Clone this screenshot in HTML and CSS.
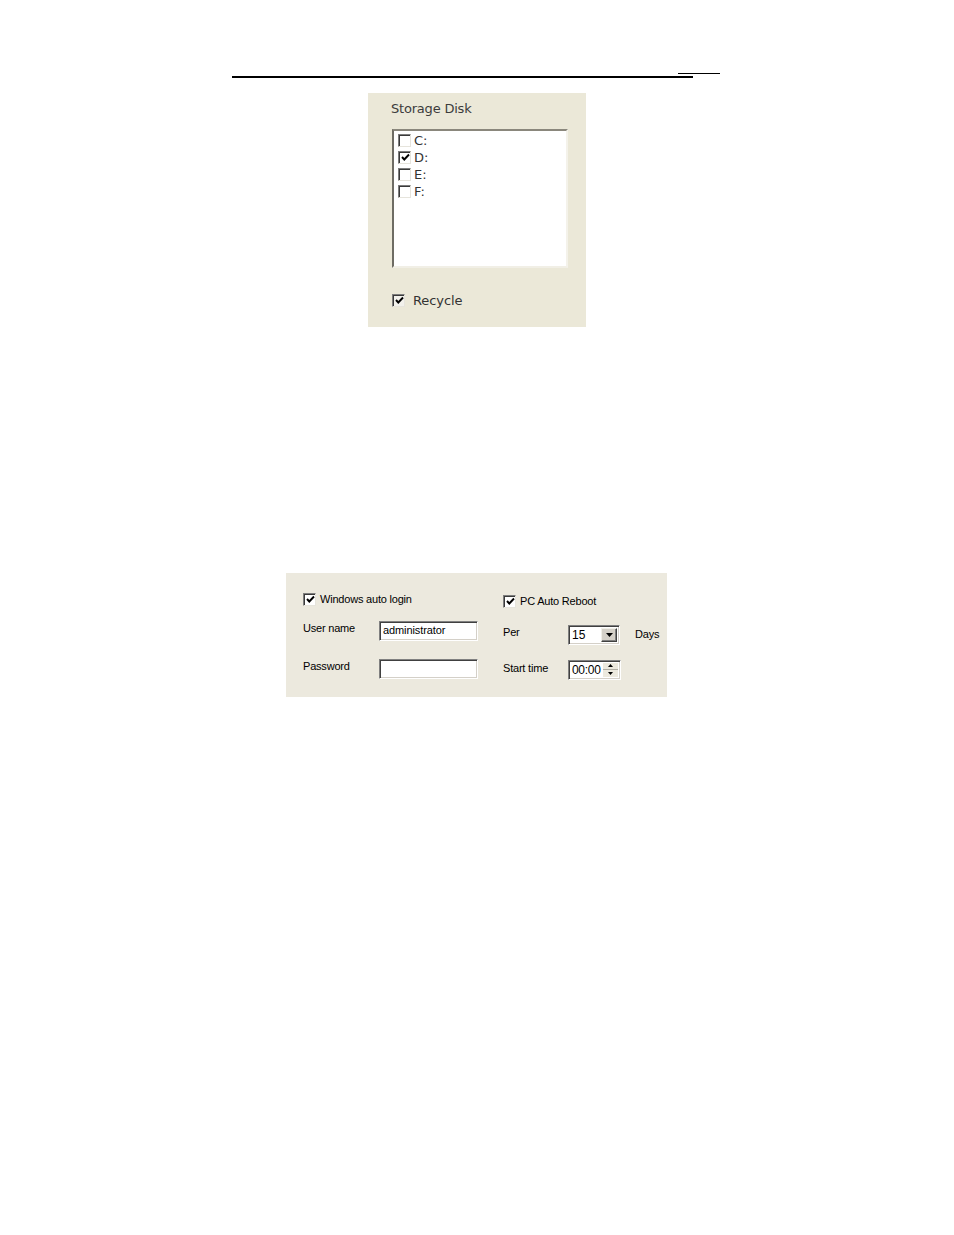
FILE: index.html
```html
<!DOCTYPE html>
<html>
<head>
<meta charset="utf-8">
<link rel="stylesheet" href="styles.css">
</head>
<body>
<div class="header">
  <div class="rule-short"></div>
  <div class="rule-main"></div>
</div>

<div class="storage">
  <div class="storage-title">Storage Disk</div>
  <div class="listbox">
    <div class="item"><span class="cb"></span><span class="item-label">C:</span></div>
    <div class="item"><span class="cb"><svg width="9" height="9" viewBox="0 0 9 9"><polyline points="1,4 3.3,6.5 8,1.5" fill="none" stroke="#000" stroke-width="1.9"/></svg></span><span class="item-label">D:</span></div>
    <div class="item"><span class="cb"></span><span class="item-label">E:</span></div>
    <div class="item"><span class="cb"></span><span class="item-label">F:</span></div>
  </div>
  <div class="recycle"><span class="cb cb-gray"><svg width="9" height="9" viewBox="0 0 9 9"><polyline points="1,4 3.3,6.5 8,1.5" fill="none" stroke="#000" stroke-width="1.9"/></svg></span><span class="recycle-label">Recycle</span></div>
</div>

<div class="settings">
  <div class="col col-left">
    <div class="check-row"><span class="cb cb-sm"><svg width="9" height="9" viewBox="0 0 9 9"><polyline points="1,4 3.3,6.5 8,1.5" fill="none" stroke="#000" stroke-width="1.9"/></svg></span><span class="txt">Windows auto login</span></div>
    <div class="field-row row-user"><span class="lbl lbl-user">User name</span><div class="textbox">administrator</div></div>
    <div class="field-row row-pass"><span class="lbl lbl-user">Password</span><div class="textbox"></div></div>
  </div>
  <div class="col col-right">
    <div class="check-row"><span class="cb cb-sm"><svg width="9" height="9" viewBox="0 0 9 9"><polyline points="1,4 3.3,6.5 8,1.5" fill="none" stroke="#000" stroke-width="1.9"/></svg></span><span class="txt">PC Auto Reboot</span></div>
    <div class="field-row row-per"><span class="lbl lbl-per">Per</span>
      <div class="combo"><span class="combo-text">15</span><span class="combo-btn"><svg width="7" height="4" viewBox="0 0 7 4"><polygon points="0,0 7,0 3.5,4" fill="#000"/></svg></span></div>
      <span class="lbl lbl-days">Days</span>
    </div>
    <div class="field-row row-time"><span class="lbl lbl-time">Start time</span>
      <div class="spin"><span class="spin-text">00:00</span><span class="spin-btns"><span class="spin-btn"><svg width="5" height="3" viewBox="0 0 5 3"><polygon points="2.5,0 5,3 0,3" fill="#000"/></svg></span><span class="spin-btn"><svg width="5" height="3" viewBox="0 0 5 3"><polygon points="0,0 5,0 2.5,3" fill="#000"/></svg></span></span></div>
    </div>
  </div>
</div>
</body>
</html>
```

FILE: styles.css
```css
html, body {
  margin: 0;
  padding: 0;
  background: #ffffff;
}

body {
  width: 954px;
  height: 1235px;
  font-family: "Liberation Sans", Arial, sans-serif;
}

.header {
  margin-left: 232px;
  width: 488px;
  padding-top: 73px;
}

.rule-short {
  margin-left: 446px;
  width: 42px;
  height: 1px;
  background: #000;
}

.rule-main {
  margin-top: 2px;
  width: 461px;
  height: 1.5px;
  background: #000;
}

/* ---------- Storage panel ---------- */
.storage {
  margin-top: 15px;
  margin-left: 368px;
  width: 218px;
  height: 234px;
  box-sizing: border-box;
  background: #ebe8d8;
  padding-top: 8px;
  font-family: "DejaVu Sans", Verdana, sans-serif;
}

.storage-title {
  margin-left: 23px;
  font-size: 13px;
  line-height: 16px;
  color: #3c3c3c;
  letter-spacing: -0.2px;
}

.listbox {
  margin-top: 12px;
  margin-left: 24px;
  width: 176px;
  height: 139px;
  box-sizing: border-box;
  background: #fff;
  border-top: 2px solid #8a877c;
  border-left: 2px solid #6e6c64;
  border-right: 2px solid #f4f2ea;
  border-bottom: 2px solid #f1efe6;
  padding: 1px 0 0 4px;
}

.item {
  display: flex;
  align-items: center;
  height: 17px;
}

.item-label {
  margin-left: 3px;
  font-size: 13px;
  color: #333;
}

.cb {
  width: 13px;
  height: 13px;
  box-sizing: border-box;
  background: #fff;
  border-top: 1px solid #7d7d7d;
  border-left: 1px solid #7d7d7d;
  border-right: 1px solid #e6e4dc;
  border-bottom: 1px solid #e6e4dc;
  box-shadow: inset 1px 1px 0 #3a3a3a;
  display: flex;
  align-items: center;
  justify-content: center;
  flex: none;
}

.cb svg {
  display: block;
  margin: 1px 0 0 1px;
}

.cb-gray {
  background: #f2f1ec;
}

.recycle {
  margin-top: 25px;
  margin-left: 24px;
  display: flex;
  align-items: center;
}

.recycle-label {
  margin-left: 8px;
  font-size: 13px;
  color: #333;
  letter-spacing: -0.1px;
}

/* ---------- Settings panel ---------- */
.settings {
  margin-top: 246px;
  margin-left: 286px;
  width: 381px;
  height: 124px;
  background: #ece9de;
  display: flex;
  font-size: 11px;
  color: #000;
}

.col {
  display: flex;
  flex-direction: column;
}

.col-left {
  padding: 20px 0 0 17px;
  width: 217px;
  box-sizing: border-box;
}

.col-right {
  padding: 22px 0 0 0;
}

.check-row {
  display: flex;
  align-items: center;
  height: 13px;
}

.check-row .txt {
  margin-left: 4px;
  line-height: 13px;
  letter-spacing: -0.2px;
}

.cb-sm {
  width: 13px;
  height: 13px;
}

.field-row {
  display: flex;
  align-items: flex-start;
}

.row-user { margin-top: 15px; }
.row-pass { margin-top: 18px; }
.row-per { margin-top: 17px; }
.row-time { margin-top: 15px; }

.lbl {
  line-height: 13px;
  letter-spacing: -0.2px;
}

.lbl-user {
  width: 76px;
  padding-top: 1px;
}

.lbl-per {
  width: 65px;
  padding-top: 1px;
}

.lbl-days {
  margin-left: 15px;
  padding-top: 3px;
}

.lbl-time {
  width: 65px;
  padding-top: 2px;
}

.textbox,
.combo,
.spin {
  box-sizing: border-box;
  height: 20px;
  background: #fff;
  border-top: 1px solid #808080;
  border-left: 1px solid #808080;
  border-right: 1px solid #ffffff;
  border-bottom: 1px solid #ffffff;
  box-shadow: inset 1px 1px 0 #404040, inset -1px -1px 0 #d4d0c8;
}

.textbox {
  width: 99px;
  padding: 2px 0 0 3px;
  line-height: 13px;
  letter-spacing: -0.1px;
}

.combo {
  width: 52px;
  display: flex;
  align-items: stretch;
  padding: 2px;
}

.combo-text {
  flex: 1;
  padding-left: 1px;
  line-height: 14px;
  font-size: 12px;
}

.combo-btn {
  width: 16px;
  box-sizing: border-box;
  background: #d4d0c8;
  border-top: 1px solid #f0efe8;
  border-left: 1px solid #f0efe8;
  border-right: 1px solid #404040;
  border-bottom: 1px solid #404040;
  box-shadow: inset -1px -1px 0 #808080;
  display: flex;
  align-items: center;
  justify-content: center;
}

.combo-btn svg {
  display: block;
  margin-top: 1px;
}

.spin {
  width: 53px;
  display: flex;
  align-items: stretch;
  padding: 2px;
}

.spin-text {
  flex: 1;
  padding-left: 1px;
  line-height: 15px;
  font-size: 12px;
  letter-spacing: -0.3px;
}

.spin-btns {
  width: 15px;
  display: flex;
  flex-direction: column;
  background: #ece9de;
}

.spin-btn {
  flex: 1;
  display: flex;
  align-items: center;
  justify-content: center;
  border-bottom: 1px solid #b0ada4;
}

.spin-btn:last-child {
  border-bottom: none;
}

.spin-btn svg {
  display: block;
}
```
